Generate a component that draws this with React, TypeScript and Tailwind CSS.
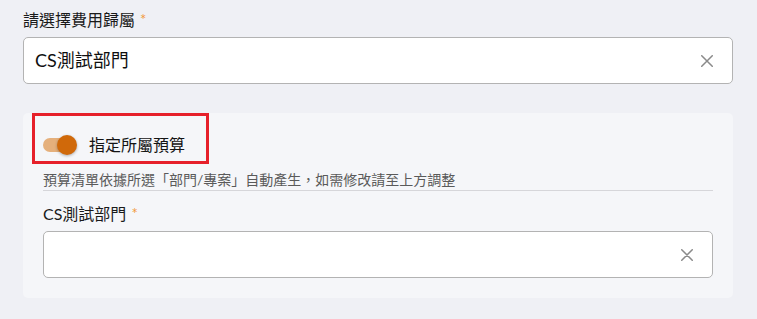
import React from "react";

const font = { fontFamily: "Lato, 'Noto Sans CJK TC', sans-serif" };

function ClearIcon() {
  return (
    <svg width="12" height="12" viewBox="0 0 12 12" className="shrink-0">
      <path d="M0.75 0.75 L11.25 11.25 M11.25 0.75 L0.75 11.25" stroke="#8a8a8a" strokeWidth="1.5" strokeLinecap="round" />
    </svg>
  );
}

export default function App() {
  return (
    <div className="w-[757px] h-[319px] bg-[#eff0f5] pt-[8px] pl-[23px] overflow-hidden" style={font}>
      <div className="w-[710px]">
        <div className="h-[24px] flex items-center text-[16px] text-[#1a1a1a] leading-[24px]">
          <span>請選擇費用歸屬</span>
          <span className="ml-[5px] text-[15px] leading-[15px] text-[#f29a3d] -mt-[2px]">*</span>
        </div>
        <div className="mt-[5px] h-[47px] bg-white border border-[#b3b3b3] rounded-[5px] flex items-center pl-[11px] pr-[19px]">
          <span className="flex-1 text-[18px] text-[#0f0f0f]">CS測試部門</span>
          <ClearIcon />
        </div>

        <div className="relative mt-[29px] bg-[#f5f6f9] rounded-[5px] px-[20px] pt-[18px] pb-[20px]">
          <div className="absolute left-[9px] top-0 w-[177px] h-[51px] border-[3px] border-[#e6202a]" />
          <div className="h-[28px] flex items-center">
            <div className="relative w-[35px] h-[20px] flex items-center">
              <div className="w-[32px] h-[14px] rounded-full bg-[#e5b07c]" />
              <div className="absolute left-[14px] top-0 w-[20px] h-[20px] rounded-full bg-[#d0690a] shadow-[0_1px_3px_rgba(0,0,0,0.3)]" />
            </div>
            <span className="ml-[11px] text-[16px] text-[#141414]">指定所屬預算</span>
          </div>
          <div className="mt-[11px] h-[21px] border-b border-[#d6d6da] text-[14px] leading-[20px] text-[#5a5a5a]">
            預算清單依據所選「部門/專案」自動產生，如需修改請至上方調整
          </div>
          <div className="mt-[11px] h-[24px] flex items-center text-[16px] text-[#1a1a1a]">
            <span>CS測試部門</span>
            <span className="ml-[5px] text-[15px] leading-[15px] text-[#f29a3d] -mt-[2px]">*</span>
          </div>
          <div className="mt-[5px] h-[47px] bg-white border border-[#b3b3b3] rounded-[5px] flex items-center justify-end pr-[19px]">
            <ClearIcon />
          </div>
        </div>
      </div>
    </div>
  );
}
